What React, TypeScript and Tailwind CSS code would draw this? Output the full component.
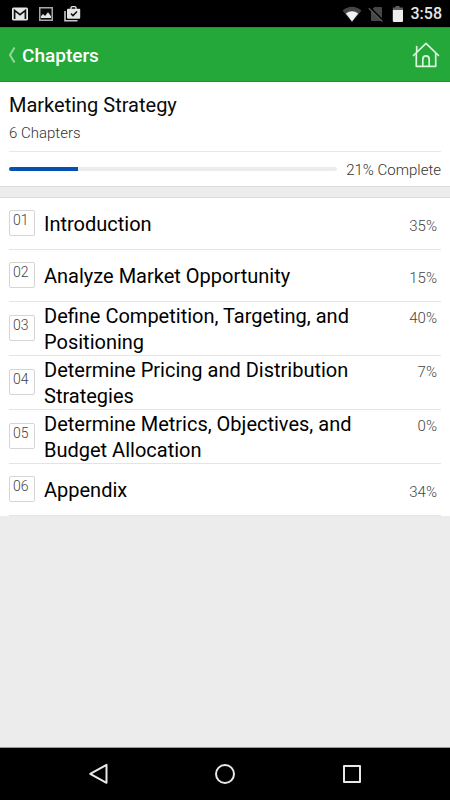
import React from "react";

type Chapter = { title: string; percent: number };

const chapters: Chapter[] = [
  { title: "Introduction", percent: 35 },
  { title: "Analyze Market Opportunity", percent: 15 },
  { title: "Define Competition, Targeting, and Positioning", percent: 40 },
  { title: "Determine Pricing and Distribution Strategies", percent: 7 },
  { title: "Determine Metrics, Objectives, and Budget Allocation", percent: 0 },
  { title: "Appendix", percent: 34 },
];

function StatusBar() {
  return (
    <div className="flex h-[27px] shrink-0 items-center bg-black pr-2 pl-3 text-[#e6e6e6]">
      <svg width="16" height="14" viewBox="0 0 16 14" aria-hidden="true">
        <rect width="16" height="13" y="0.5" rx="1.5" fill="#e6e6e6" />
        <path d="M2.6 12V3.4L8 7.6l5.4-4.2V12" fill="none" stroke="#111" strokeWidth="1.7" />
      </svg>
      <svg className="ml-[11px]" width="14" height="14" viewBox="0 0 14 14" aria-hidden="true">
        <rect x="0.75" y="0.75" width="12.5" height="12.5" fill="#080808" stroke="#a8a8a8" strokeWidth="1.5" />
        <path d="M2 11V9.2l2-2.3L6 9l3-3.8 3 4V11z" fill="#e6e6e6" />
      </svg>
      <svg className="ml-[11px]" width="17" height="16" viewBox="0 0 17 16" aria-hidden="true">
        <path d="M1 5v9.8h12.5" fill="none" stroke="#c8c8c8" strokeWidth="1.6" />
        <path d="M7 3V1.5L8 .6h3l1 .9V3" fill="none" stroke="#e6e6e6" strokeWidth="1.3" />
        <rect x="3" y="2.8" width="13.2" height="10" rx="1" fill="#e6e6e6" />
        <path d="M7 7.6l2 2 4-4.1" fill="none" stroke="#111" strokeWidth="1.5" />
      </svg>
      <div className="ml-auto flex items-center">
        <svg width="20" height="16" viewBox="0 0 20 16" aria-hidden="true">
          <path d="M0.5 4.5Q10-3 19.5 4.5L10 16z" fill="#454545" />
          <path d="M3.8 7.4Q10 3.2 16.2 7.4L10 15.4z" fill="#f2f2f2" />
        </svg>
        <svg className="ml-1.5" width="16" height="16" viewBox="0 0 16 16" aria-hidden="true">
          <path d="M3 4.6L6.5 1H13q1 0 1 1v12.2q0 .8-1 .8H4q-1 0-1-.8z" fill="#484848" />
          <path d="M1.8 1.4l13.4 13.2" stroke="#000" strokeWidth="2" />
          <path d="M0.8 2.2l13.6 13.3" stroke="#565656" strokeWidth="1.4" />
        </svg>
        <svg className="ml-2" width="12" height="16" viewBox="0 0 12 16" aria-hidden="true">
          <path d="M3.5 0h4v1.5H11V4H.8V1.5h2.7z" fill="#606060" />
          <path d="M.8 4H11v11q0 1-1 1H1.8q-1 0-1-1z" fill="#ededed" />
        </svg>
        <span className="ml-[7px] pt-px text-base leading-7 font-medium">3:58</span>
      </div>
    </div>
  );
}

function Header() {
  return (
    <header className="flex h-[55px] shrink-0 items-center justify-between border-t border-b border-t-[#1c9434] border-b-[#169a2c] bg-[#23a839] pt-px pr-2.5 pl-2 text-white">
      <button type="button" className="flex items-center gap-1.5">
        <svg width="8" height="16" viewBox="0 0 8 16" aria-hidden="true">
          <path d="M6.5.5L2 8l4.5 7.5" fill="none" stroke="#96d6a0" strokeWidth="2" />
        </svg>
        <span className="pt-px text-[19px] leading-7 font-medium">Chapters</span>
      </button>
      <button type="button" aria-label="Home">
        <svg width="28" height="26" viewBox="0 0 28 26" fill="none" stroke="#dcf5df" strokeWidth="1.7" strokeLinecap="round" strokeLinejoin="round" aria-hidden="true">
          <path d="M1.5 13.5L14 1.4l12.5 12.1" />
          <path d="M4.3 11.5V24.3h19.4V11.5" />
          <path d="M4.7 9.5V4.6" />
          <path d="M10.8 24.2v-7q0-3.4 3.2-3.4t3.2 3.4v7" />
        </svg>
      </button>
    </header>
  );
}

function Summary() {
  return (
    <section className="border-b border-[#dcdcdc] bg-white px-[9px] pt-2.5">
      <h1 className="text-xl leading-[26px] text-[#0a0a0a]">Marketing Strategy</h1>
      <p className="h-[34px] border-b border-[#e8e8e8] pt-[5px] text-[15px] leading-5 font-light text-[#333]">6 Chapters</p>
      <div className="flex h-[34px] items-center gap-[9px]">
        <div className="h-1 flex-1 overflow-hidden rounded-full bg-[#ececec]" role="progressbar" aria-label="Course progress" aria-valuenow={21} aria-valuemin={0} aria-valuemax={100}>
          <div className="h-full bg-[#0650b3]" style={{ width: "21%" }} />
        </div>
        <span className="pt-0.5 text-[15px] leading-5 font-light text-[#333]">21% Complete</span>
      </div>
    </section>
  );
}

function ChapterRow({ chapter, number }: { chapter: Chapter; number: number }) {
  return (
    <li className="flex min-h-[52px] items-center gap-[9px] border-b border-[#e4e4e4]">
      <span className="mb-px h-[26px] w-[26px] shrink-0 rounded-xs border border-[#d5d5d5] pl-[3px] text-sm leading-[18px] font-light text-[#444]">
        {String(number).padStart(2, "0")}
      </span>
      <div className="flex flex-1 items-baseline justify-between pt-px pr-1">
        <a href={`#chapter-${number}`} className="max-w-[320px] text-xl leading-[26px] text-black">
          {chapter.title}
        </a>
        <span className="text-[15px] leading-5 font-light text-[#444]">{chapter.percent}%</span>
      </div>
    </li>
  );
}

export default function App() {
  return (
    <div className="flex min-h-screen flex-col bg-[#ececec] font-['Roboto',sans-serif]">
      <StatusBar />
      <Header />
      <main className="flex-1">
        <Summary />
        <ol className="mt-2.5 border-t border-[#dcdcdc] bg-white px-[9px]">
          {chapters.map((chapter, i) => (
            <ChapterRow key={chapter.title} chapter={chapter} number={i + 1} />
          ))}
        </ol>
      </main>
      <nav className="flex h-[53px] shrink-0 items-center justify-center gap-[105px] border-t border-[#999] bg-black">
        <button type="button" aria-label="Back">
          <svg width="22" height="22" viewBox="0 0 22 22" fill="none" stroke="#e8e8e8" strokeWidth="2" strokeLinejoin="round" aria-hidden="true">
            <path d="M19.5 1.8v18L3.2 10.8z" />
          </svg>
        </button>
        <button type="button" aria-label="Home screen">
          <svg width="22" height="22" viewBox="0 0 22 22" fill="none" stroke="#e8e8e8" strokeWidth="2" aria-hidden="true">
            <circle cx="11" cy="11" r="9" />
          </svg>
        </button>
        <button type="button" aria-label="Recent apps">
          <svg width="22" height="22" viewBox="0 0 22 22" fill="none" stroke="#e8e8e8" strokeWidth="2" strokeLinejoin="round" aria-hidden="true">
            <rect x="3" y="3" width="16" height="16" />
          </svg>
        </button>
      </nav>
    </div>
  );
}
